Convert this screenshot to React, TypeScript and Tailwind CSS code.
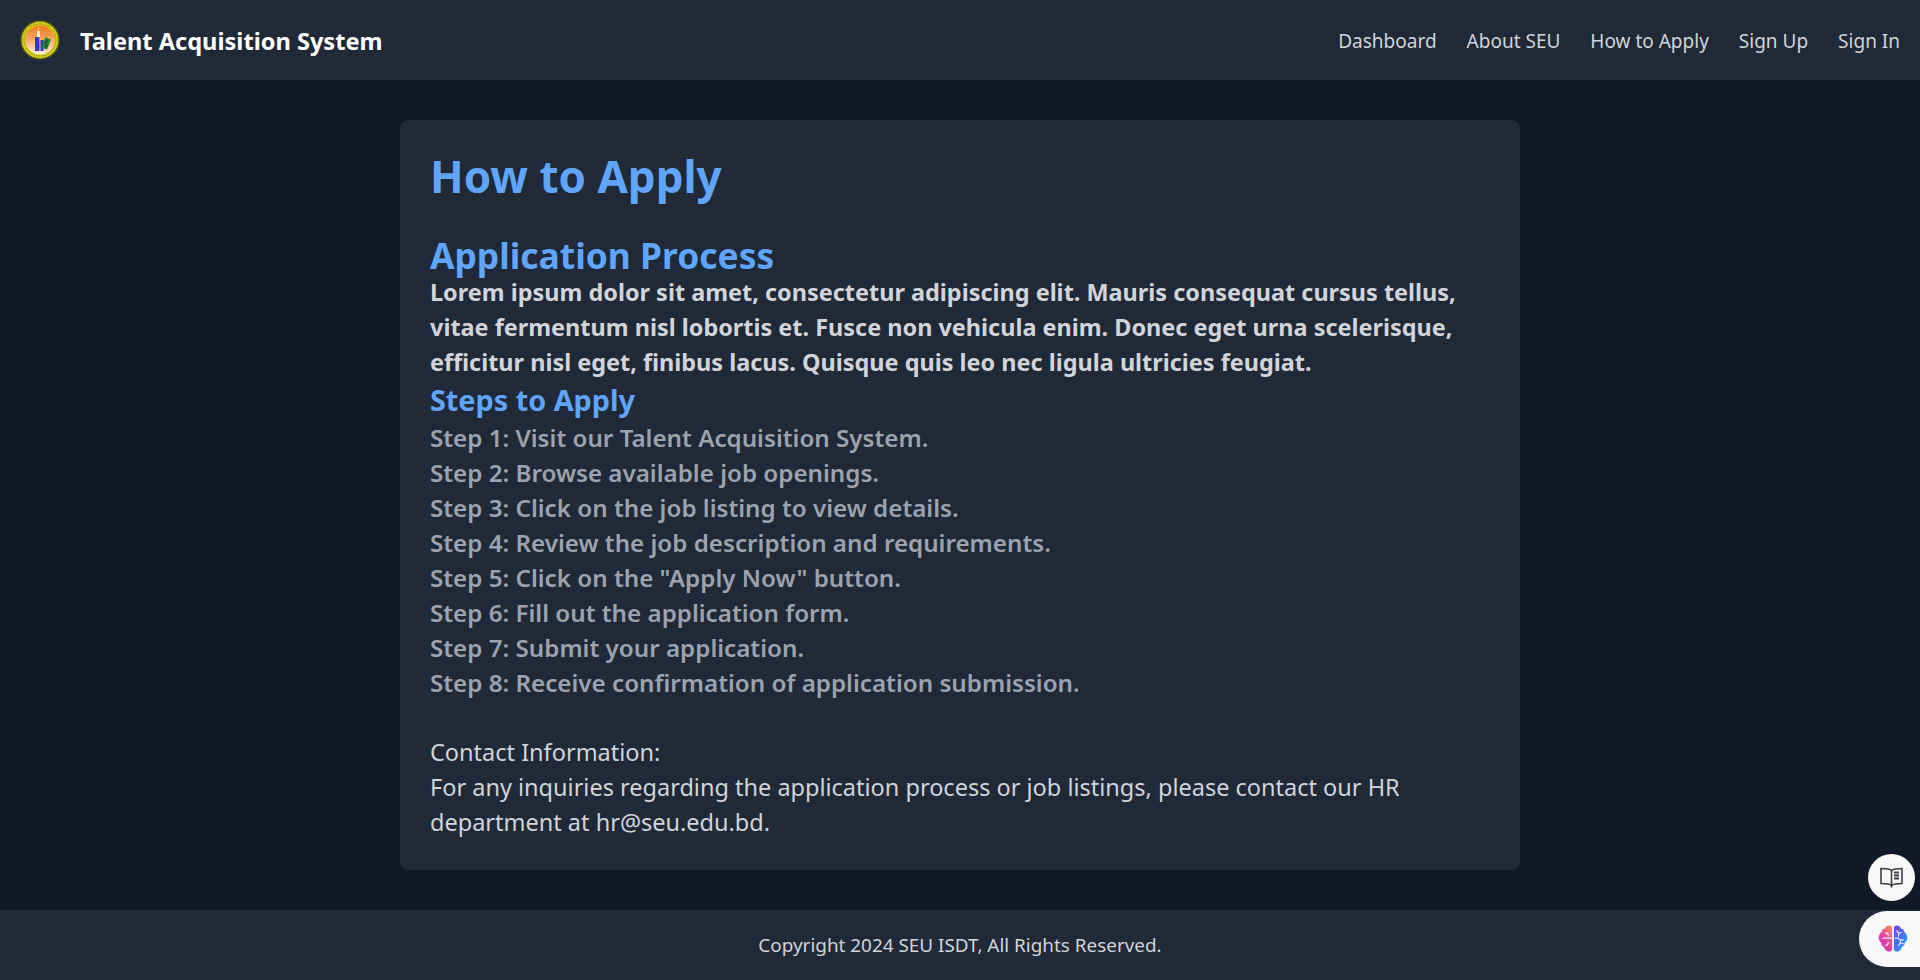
import React from 'react';

const navLinks = ['Dashboard', 'About SEU', 'How to Apply', 'Sign Up', 'Sign In'];

const steps = [
  'Step 1: Visit our Talent Acquisition System.',
  'Step 2: Browse available job openings.',
  'Step 3: Click on the job listing to view details.',
  'Step 4: Review the job description and requirements.',
  'Step 5: Click on the "Apply Now" button.',
  'Step 6: Fill out the application form.',
  'Step 7: Submit your application.',
  'Step 8: Receive confirmation of application submission.',
];

const Logo = () => (
  <svg width="40" height="40" viewBox="0 0 40 40">
    <defs>
      <linearGradient id="logoFill" x1="0" y1="0" x2="0" y2="1">
        <stop offset="0" stopColor="#f07a1c" />
        <stop offset="0.5" stopColor="#f9a766" />
        <stop offset="1" stopColor="#fdeee2" />
      </linearGradient>
    </defs>
    <circle cx="20" cy="20" r="19.5" fill="#6f6c12" />
    <circle cx="20" cy="20" r="18.2" fill="#d6d01a" />
    <circle cx="20" cy="20" r="16" fill="none" stroke="#8a8614" strokeWidth="1" strokeDasharray="1.5 1" />
    <circle cx="20" cy="20" r="14.5" fill="url(#logoFill)" />
    <rect x="17" y="11" width="3" height="12" fill="#f6e6d6" />
    <path d="M18.500 6c1.400 1.800 1.400 3.500 0 5-1.400-1.500-1.400-3.200 0-5z" fill="#f5c92c" />
    <rect x="15" y="17" width="4.500" height="14" fill="#3338b8" />
    <rect x="20.500" y="20" width="3" height="11" fill="#3338b8" />
    <rect x="23" y="18" width="6" height="11" fill="#1f8a3c" transform="rotate(20 26 24)" />
    <path d="M28 21.500c-2-1-3.500.5-2.500 2 1 1.200 2 1 1.500 2.500-.5 1-1.500.8-2.500.3" fill="none" stroke="#0f2c16" strokeWidth="1" />
  </svg>
);

const BookIcon = () => (
  <svg width="23" height="21" viewBox="0 0 23 21" fill="none" stroke="#3f3f46" strokeWidth="1.600">
    <path d="M11.500 3.500C10 2 7 1.500 1 1.500v15c6 0 9 .5 10.500 2 1.500-1.500 4.500-2 10.500-2v-15c-6 0-9 .5-10.500 2z" />
    <path d="M11.500 3.500v17" />
    <path d="M14 5.500h5M14 8.500h5M14 11.500h5" strokeWidth="2" />
  </svg>
);

const BrainIcon = () => (
  <svg width="30" height="28" viewBox="0 0 32 30">
    <defs>
      <linearGradient id="brainLeft" x1="0.9" y1="0" x2="0.1" y2="1">
        <stop offset="0" stopColor="#fb923c" />
        <stop offset="0.45" stopColor="#ec4899" />
        <stop offset="1" stopColor="#c026d3" />
      </linearGradient>
      <linearGradient id="brainRight" x1="0" y1="0" x2="1" y2="1">
        <stop offset="0" stopColor="#7c3aed" />
        <stop offset="0.6" stopColor="#3b82f6" />
        <stop offset="1" stopColor="#22b8f0" />
      </linearGradient>
    </defs>
    <path d="M15 3.500c0-2-2-3.200-4-2.800-2 .3-3.200 1.500-3.500 3.300C5.500 3.500 4 5 4.300 7 1.500 9 .5 12 .8 14c-.2 2 1 4 2.700 5-.3 2 .8 4 3 4.500.5 2.500 2.500 4.800 5 5 1.500.2 3.500-.8 3.500-2.500z" fill="url(#brainLeft)" />
    <path d="M17 3.500c0-2 2-3.200 4-2.800 2 .3 3.200 1.500 3.500 3.300 2-.5 3.500 1 3.200 3 2.800 2 3.800 5 3.500 7 .2 2-1 4-2.700 5 .3 2-.8 4-3 4.500-.5 2.500-2.500 4.800-5 5-1.500.2-3.500-.8-3.500-2.500z" fill="url(#brainRight)" />
    <g fill="none" stroke="#f5e9ff" strokeWidth="1.200" strokeLinecap="round">
      <path d="M5 14h10M8 8.500c2 0 3 1 3 3M8 22c1.500-.2 3-1 3-3.500" />
      <path d="M20 6l2 3 3-1M22 9v3M18 14h3l3 2h3M22 22l2-3 3 1M24 19v-3" />
    </g>
  </svg>
);

export default function App() {
  return (
    <div className="h-screen flex flex-col bg-[#111827] font-['Noto_Sans','Open_Sans',sans-serif]">
      <nav className="h-20 shrink-0 bg-[#1f2937] flex items-center justify-between px-5">
        <div className="flex items-center gap-[20px]">
          <Logo />
          <span className="text-white font-bold text-[23.6px] pt-[3px]">Talent Acquisition System</span>
        </div>
        <div className="flex items-center gap-[30px]">
          {navLinks.map((link) => (
            <a key={link} className="text-[#d1d5db] text-[19px] pt-[3px]">{link}</a>
          ))}
        </div>
      </nav>

      <main className="h-[830px] shrink-0 flex justify-center py-10">
        <div className="w-[1120px] bg-[#1f2937] rounded-lg p-[30px]">
          <h1 className="text-[#60a5fa] text-[44px] font-bold leading-[52px] mb-[33px]">How to Apply</h1>
          <h2 className="text-[#60a5fa] text-[35.4px] font-bold leading-[40px]">Application Process</h2>
          <p className="text-[#d1d5db] text-[23.44px] font-bold leading-[35px]">
            Lorem ipsum dolor sit amet, consectetur adipiscing elit. Mauris consequat cursus tellus, vitae fermentum nisl lobortis et. Fusce non vehicula enim. Donec eget urna scelerisque, efficitur nisl eget, finibus lacus. Quisque quis leo nec ligula ultricies feugiat.
          </p>
          <h3 className="text-[#60a5fa] text-[28.8px] font-bold leading-[40px]">Steps to Apply</h3>
          <ul className="text-[#9ca3af] text-[24.2px] font-semibold leading-[35px]">
            {steps.map((step) => (
              <li key={step}>{step}</li>
            ))}
          </ul>
          <p className="text-[#d1d5db] text-[23.5px] leading-[35px] mt-[35px]">
            Contact Information:
            <br />
            For any inquiries regarding the application process or job listings, please contact our HR department at hr@seu.edu.bd.
          </p>
        </div>
      </main>

      <footer className="h-[70px] shrink-0 bg-[#1f2937] flex items-center justify-center">
        <p className="text-[#d1d5db] text-[18.9px]">Copyright 2024 SEU ISDT, All Rights Reserved.</p>
      </footer>

      <button className="fixed right-[5px] bottom-[79px] w-[47px] h-[47px] rounded-full bg-[#f8f8f8] flex items-center justify-center">
        <BookIcon />
      </button>
      <button className="fixed right-0 bottom-[13px] w-[61px] h-[56px] rounded-l-[28px] bg-[#f8f8f8] flex items-center pl-[19px]">
        <BrainIcon />
      </button>
    </div>
  );
}
